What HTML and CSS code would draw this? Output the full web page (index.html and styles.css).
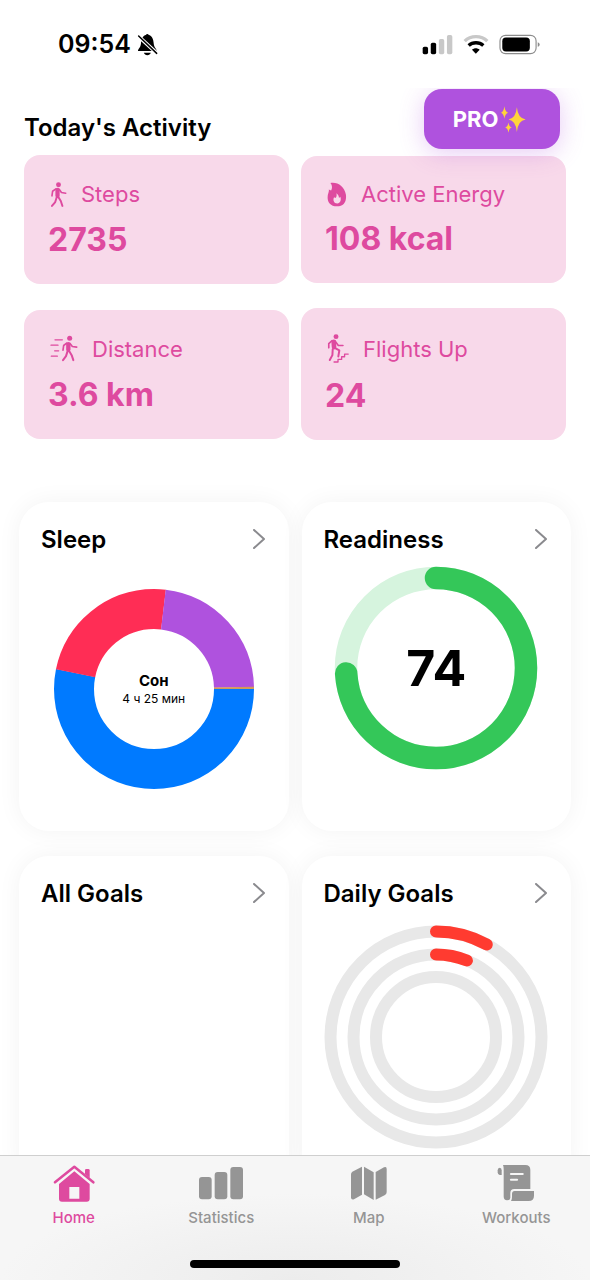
FILE: index.html
```html
<!DOCTYPE html>
<html lang="en">
<head>
<meta charset="utf-8">
<meta name="viewport" content="width=device-width, initial-scale=1">
<title>Today's Activity</title>
<link rel="stylesheet" href="styles.css">
</head>
<body>
<div class="app">
  <header class="status">
    <div class="status-side">
      <span class="clock">09:54</span>
      <svg class="bell" viewBox="405 68 64 68" width="21" height="23" aria-hidden="true">
        <path d="M408 122c0-7 8-10 9-22 1-16 6-25 15-27 2-4 7-4 9 0 9 2 14 11 15 27 1 12 9 15 9 22z" fill="#000"/>
        <path d="M426 127h21c-2 10-19 10-21 0z" fill="#000"/>
        <path d="M407 75l60 55" stroke="#fff" stroke-width="11"/>
        <path d="M410 76l55 53" stroke="#000" stroke-width="4.500" stroke-linecap="round"/>
      </svg>
    </div>
    <div class="status-side status-right">
      <svg viewBox="68 70 92 62" width="31" height="21" aria-hidden="true">
        <rect x="70" y="108" width="16" height="22" rx="5"/>
        <rect x="94" y="96" width="16" height="34" rx="5"/>
        <rect x="118" y="85" width="16" height="45" rx="5" fill="#c8c8c8"/>
        <rect x="142" y="73" width="16" height="57" rx="5" fill="#c8c8c8"/>
      </svg>
      <svg viewBox="190 70 78 62" width="26" height="21" fill="none" aria-hidden="true">
        <path d="M195 91c18-18 50-18 68 0" stroke="#c8c8c8" stroke-width="10"/>
        <path d="M207 104c12-11 32-11 44 0" stroke="#000" stroke-width="10"/>
        <path d="M217 117c7-6 16-6 23 0l-11.500 12z" fill="#000"/>
      </svg>
      <svg viewBox="299 69 126 64" width="42" height="21" aria-hidden="true">
        <rect x="301" y="73" width="110" height="56" rx="17" fill="none" stroke="#8c8c8c" stroke-width="3.500"/>
        <rect x="308" y="80" width="84" height="42" rx="11"/>
        <path d="M416 94c8 3 8 11 0 14z" fill="#8c8c8c"/>
      </svg>
    </div>
  </header>

  <main class="content">
    <section class="activity">
      <div class="activity-bar">
        <h1 class="activity-title">Today's Activity</h1>
        <button class="pro" type="button">PRO
          <svg viewBox="311 286 74 80" width="25" height="27" fill="#ffd43b" aria-hidden="true">
            <path d="M358 290q3 33 26 36q-23 3-26 37q-3-34-25-37q22-3 25-36z"/>
            <path d="M321 287q2 16 11 19q-9 3-11 18q-2-15-10-18q8-3 10-19z"/>
            <path d="M333 335q2 13 10 15q-8 2-10 15q-2-13-10-15q8-2 10-15z"/>
          </svg>
        </button>
      </div>
      <div class="metrics">
        <article class="metric">
          <h2 class="metric-label">
            <svg viewBox="90 90 52 80" width="17" height="27" fill="none" stroke="currentColor" stroke-linecap="round" stroke-linejoin="round" aria-hidden="true">
              <circle cx="116" cy="100" r="7.500" fill="currentColor" stroke="none"/>
              <path d="M113 116v18" stroke-width="13"/>
              <path d="M108 113l-10 7-2 14M118 114l7 10 13 2" stroke-width="5"/>
              <path d="M111 137l-5 16-10 12M115 137l8 13 5 15" stroke-width="6"/>
            </svg>
            Steps
          </h2>
          <p class="metric-value">2735</p>
        </article>
        <article class="metric metric-low">
          <h2 class="metric-label">
            <svg viewBox="94 94 60 76" width="20" height="25" aria-hidden="true">
              <path fill="currentColor" d="M104 97c22-4 43 11 47 35 3 22-7 36-27 36-26 0-33-22-26-41 1-4 2-6 1-10l7 3c4-6 4-16-2-23z"/>
              <path fill="#f8d9ea" d="M122 128c7 5 8 10 8 15l4-4c4 9 0 20-9 20-11 0-14-11-10-19l4 3c4-4 5-9 3-15z"/>
            </svg>
            Active Energy
          </h2>
          <p class="metric-value">108 kcal</p>
        </article>
        <article class="metric">
          <h2 class="metric-label">
            <svg viewBox="92 103 84 80" width="28" height="27" fill="none" stroke="currentColor" stroke-linecap="round" stroke-linejoin="round" aria-hidden="true">
              <circle cx="151" cy="112" r="7.500" fill="currentColor" stroke="none"/>
              <path d="M147 130v16" stroke-width="13"/>
              <path d="M142 127l-9 7-2 14M152 128l7 9 13 2" stroke-width="5"/>
              <path d="M145 150l-5 16-9 12M149 150l8 13 5 15" stroke-width="6"/>
              <path d="M107 117h22M95 133h21M106 150h12M96 166h18" stroke-width="4"/>
            </svg>
            Distance
          </h2>
          <p class="metric-value">3.6 km</p>
        </article>
        <article class="metric metric-tall">
          <h2 class="metric-label">
            <svg viewBox="97 100 66 88" width="22" height="29" fill="none" stroke="currentColor" stroke-linecap="round" stroke-linejoin="round" aria-hidden="true">
              <circle cx="124" cy="108" r="7.500" fill="currentColor" stroke="none"/>
              <path d="M117 124l1 16" stroke-width="14"/>
              <path d="M112 120l-10 9v13M121 121l10 14h14" stroke-width="5"/>
              <path d="M114 146l-1 18-8 15M120 142l14 8-3 18" stroke-width="6"/>
              <path d="M118 185h12v-8h11v-8h9v-8h11" stroke-width="4"/>
            </svg>
            Flights Up
          </h2>
          <p class="metric-value">24</p>
        </article>
      </div>
    </section>

    <section class="cards">
      <a class="card" href="#sleep">
        <div class="card-head">
          <h2 class="card-title">Sleep</h2>
          <svg class="chevron" viewBox="0 0 12 20" width="12" height="20" aria-hidden="true"><path d="M1 1l10 9-10 9"/></svg>
        </div>
        <div class="chart chart-sleep">
          <svg viewBox="0 0 200 200" width="200" height="200" fill="none" stroke-width="40" aria-hidden="true">
            <circle cx="100" cy="100" r="80" pathLength="360" stroke="#007aff" stroke-dasharray="191.500 168.500"/>
            <circle cx="100" cy="100" r="80" pathLength="360" stroke="#ff2d55" stroke-dasharray="85.500 274.500" stroke-dashoffset="-191.400"/>
            <circle cx="100" cy="100" r="80" pathLength="360" stroke="#af52de" stroke-dasharray="82 278" stroke-dashoffset="-276.800"/>
            <circle cx="100" cy="100" r="80" pathLength="360" stroke="#d39a58" stroke-dasharray="1.400 358.600" stroke-dashoffset="-358.600"/>
          </svg>
          <div class="chart-text">
            <strong class="sleep-name">Сон</strong>
            <span class="sleep-time">4 ч 25 мин</span>
          </div>
        </div>
      </a>
      <a class="card" href="#readiness">
        <div class="card-head">
          <h2 class="card-title">Readiness</h2>
          <svg class="chevron" viewBox="0 0 12 20" width="12" height="20" aria-hidden="true"><path d="M1 1l10 9-10 9"/></svg>
        </div>
        <div class="chart">
          <svg viewBox="0 0 204 204" width="204" height="204" fill="none" stroke-width="22.500" aria-hidden="true">
            <circle cx="102" cy="102" r="90" stroke="#d6f4de"/>
            <circle cx="102" cy="102" r="90" pathLength="100" stroke="#34c759" stroke-linecap="round" stroke-dasharray="74 26" transform="rotate(-90 102 102)"/>
          </svg>
          <div class="chart-text"><strong class="score">74</strong></div>
        </div>
      </a>
      <a class="card" href="#all-goals">
        <div class="card-head">
          <h2 class="card-title">All Goals</h2>
          <svg class="chevron" viewBox="0 0 12 20" width="12" height="20" aria-hidden="true"><path d="M1 1l10 9-10 9"/></svg>
        </div>
      </a>
      <a class="card" href="#daily-goals">
        <div class="card-head">
          <h2 class="card-title">Daily Goals</h2>
          <svg class="chevron" viewBox="0 0 12 20" width="12" height="20" aria-hidden="true"><path d="M1 1l10 9-10 9"/></svg>
        </div>
        <div class="chart chart-goals">
          <svg viewBox="0 0 224 224" width="224" height="224" fill="none" stroke-width="12" aria-hidden="true">
            <g stroke="#e8e8e8">
              <circle cx="112" cy="112" r="105.500"/>
              <circle cx="112" cy="112" r="82.500"/>
              <circle cx="112" cy="112" r="60"/>
            </g>
            <g stroke="#ff3b30" stroke-linecap="round" transform="rotate(-90 112 112)">
              <circle cx="112" cy="112" r="105.500" pathLength="360" stroke-dasharray="28.800 331.200"/>
              <circle cx="112" cy="112" r="82.500" pathLength="360" stroke-dasharray="22 338"/>
            </g>
          </svg>
        </div>
      </a>
    </section>
  </main>

  <footer class="dock">
    <nav class="tabs">
      <a class="tab tab-active" href="#home" aria-current="page">
        <svg viewBox="155 57 126 114" width="42" height="38" aria-hidden="true">
          <path d="M161 112l58-47 57 47" fill="none" stroke="currentColor" stroke-width="7.500" stroke-linecap="round" stroke-linejoin="round"/>
          <path d="M251 87V76q0-4 4-4h6q4 0 4 4v23z" fill="currentColor"/>
          <path fill="currentColor" fill-rule="evenodd" d="M173 117l46-38 46 38v44q0 9-9 9h-74q-9 0-9-9zM204 126v35h30v-35z"/>
        </svg>
        Home
      </a>
      <a class="tab" href="#statistics">
        <svg viewBox="594 57 138 114" width="46" height="38" fill="currentColor" aria-hidden="true">
          <rect x="597" y="96" width="38" height="67" rx="9"/>
          <rect x="644" y="81" width="38" height="82" rx="9"/>
          <rect x="691" y="66" width="38" height="97" rx="9"/>
        </svg>
        Statistics
      </a>
      <a class="tab" href="#map">
        <svg viewBox="165 57 114 114" width="38" height="38" fill="currentColor" aria-hidden="true">
          <path d="M201 65v84l-24 14q-9 3-9-6V88q0-5 4-8z"/>
          <path d="M207 65l29 17v83l-29-17z"/>
          <path d="M242 81l25-14q8-4 8 5v69q0 6-5 9l-28 14z"/>
        </svg>
        Map
      </a>
      <a class="tab" href="#workouts">
        <svg viewBox="607 57 114 114" width="38" height="38" fill="currentColor" aria-hidden="true">
          <path d="M609 76q0-8 6-8 6 0 6 8v14h-6q-6 0-6-8z"/>
          <path fill-rule="evenodd" d="M625 60h67q15 0 15 15v57h-48q-12 0-12 12v14q0 8-10 8-10 0-10-12V72q0-8-2-12zM648 84q-5 3 0 6h37q5-3 0-6zM648 101q-5 3 0 6h20q5-3 0-6z"/>
          <path d="M660 138h58v14q0 16-16 16h-53q3-4 3-12v-9q0-9 8-9z"/>
        </svg>
        Workouts
      </a>
    </nav>
    <div class="home-indicator"></div>
  </footer>
</div>
</body>
</html>
```
FILE: styles.css
```css
* {
  box-sizing: border-box;
}

body {
  margin: 0;
  background: #fff;
  color: #000;
  font-family: Inter, "Liberation Sans", sans-serif;
}

h1,
h2,
p {
  margin: 0;
}

a {
  color: inherit;
  text-decoration: none;
}

svg {
  display: block;
  flex: none;
}

.app {
  display: flex;
  flex-direction: column;
  height: 100vh;
  overflow: hidden;
}

.status {
  display: flex;
  justify-content: space-between;
  align-items: center;
  flex: none;
  height: 88px;
  padding: 0 49px 0 58px;
}

.status-side {
  display: flex;
  align-items: center;
  gap: 6px;
}

.status-right {
  gap: 10px;
}

.clock {
  font-size: 25px;
  font-weight: 600;
}

.content {
  flex: 1;
  min-height: 0;
  overflow: hidden;
}

.activity {
  padding: 0 24px;
}

.activity-bar {
  position: relative;
  display: flex;
  align-items: flex-end;
  height: 67px;
  padding-bottom: 11px;
}

.activity-title {
  font-size: 24px;
  line-height: 32px;
  font-weight: 600;
}

.pro {
  position: absolute;
  top: 1px;
  right: 6px;
  display: flex;
  justify-content: center;
  align-items: center;
  gap: 3px;
  width: 136px;
  height: 60px;
  padding: 0 5px 0 0;
  border: 0;
  border-radius: 18px;
  background: #af52de;
  box-shadow: 0 4px 24px rgba(175, 82, 222, 0.3);
  color: #fff;
  font: inherit;
  font-size: 22px;
  font-weight: 700;
}

.metrics {
  display: grid;
  grid-template-columns: 1fr 1fr;
  align-items: center;
  gap: 24px 12px;
}

.metric {
  padding: 24px;
  border-radius: 16px;
  background: #f8d9ea;
  color: #de4a9f;
}

.metric-label {
  display: flex;
  align-items: center;
  gap: 14px;
  height: 30px;
  padding-left: 2px;
  font-size: 22px;
  font-weight: 400;
}

.metric-low .metric-label {
  height: 28px;
}

.metric-tall .metric-label {
  height: 33px;
}

.metric-value {
  margin-top: 11px;
  font-size: 32px;
  line-height: 40px;
  font-weight: 700;
}

.cards {
  display: grid;
  grid-template-columns: 1fr 1fr;
  grid-auto-rows: 329px;
  gap: 25px 13px;
  padding: 62px 19px 24px;
}

.card {
  padding: 21px 22px;
  border-radius: 30px;
  background: #fff;
  box-shadow: 0 0 24px rgba(0, 0, 0, 0.05);
}

.card-head {
  display: flex;
  justify-content: space-between;
  align-items: center;
  height: 32px;
  padding-right: 2px;
}

.card-title {
  font-size: 24px;
  font-weight: 600;
}

.chevron {
  fill: none;
  stroke: #8a8a8e;
  stroke-width: 2;
  stroke-linecap: round;
  stroke-linejoin: round;
}

.chart {
  display: grid;
  place-items: center;
  margin-top: 11px;
}

.chart-sleep {
  margin-top: 34px;
}

.chart-goals {
  margin-top: 16px;
}

.chart > * {
  grid-area: 1 / 1;
}

.chart-text {
  display: flex;
  flex-direction: column;
  align-items: center;
  gap: 2px;
}

.sleep-name {
  font-size: 15px;
  line-height: 17px;
  font-weight: 700;
}

.sleep-time {
  font-size: 12px;
  line-height: 15px;
}

.score {
  font-size: 50px;
  line-height: 60px;
  font-weight: 700;
}

.dock {
  flex: none;
  position: relative;
  padding-bottom: 12px;
  border-top: 1px solid #cfcfcf;
  background: radial-gradient(ellipse 50% 70% at 50% 100%, #ececec, #f6f6f6);
}

.tabs {
  display: grid;
  grid-template-columns: repeat(4, 1fr);
}

.tab {
  display: flex;
  flex-direction: column;
  align-items: center;
  gap: 6px;
  padding: 8px 0 32px;
  color: #959595;
  font-size: 15px;
  line-height: 20px;
  font-weight: 500;
}

.tab-active {
  color: #de4a9f;
}

.home-indicator {
  width: 210px;
  height: 8px;
  margin: 0 auto;
  border-radius: 4px;
  background: #000;
}
```
